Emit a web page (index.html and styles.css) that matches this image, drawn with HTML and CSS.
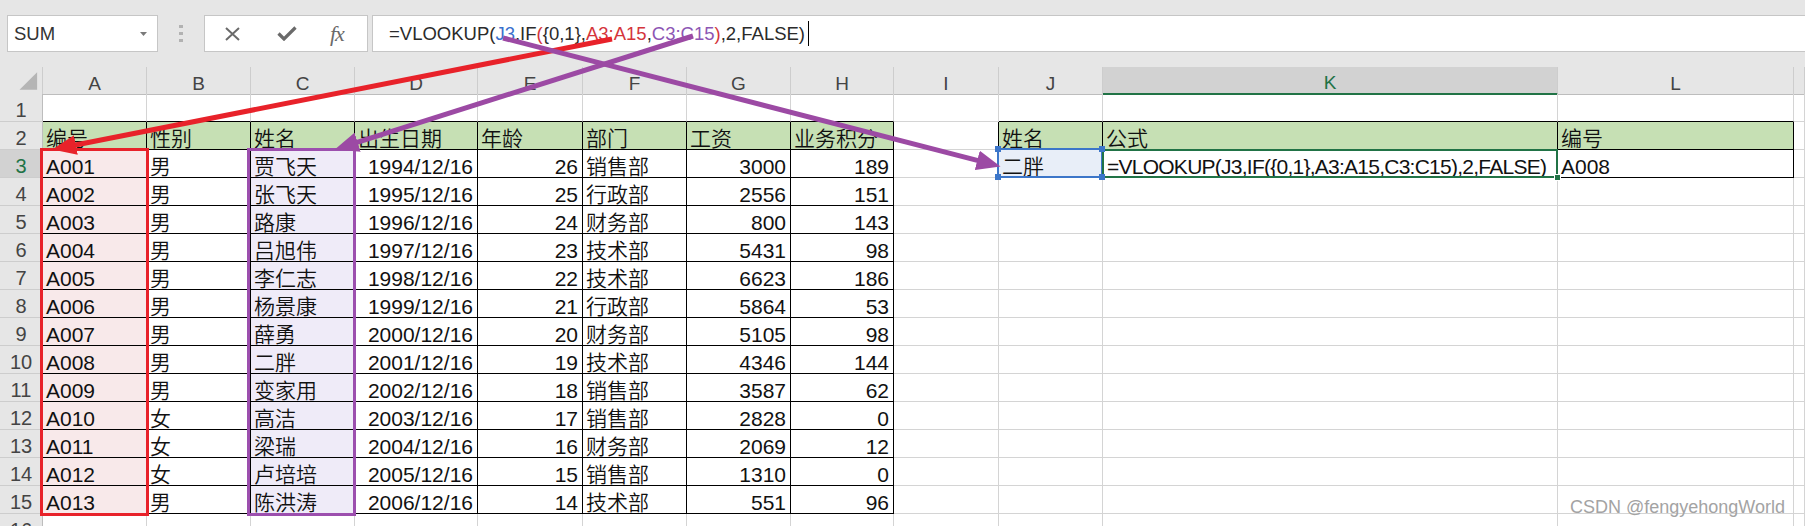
FILE: index.html
```html
<!DOCTYPE html>
<html lang="zh">
<head>
<meta charset="utf-8">
<title>VLOOKUP IF 反向查找</title>
<link rel="stylesheet" href="styles.css">
</head>
<body>
<div class="app">
  <div class="fbar">
    <div class="namebox"><span>SUM</span><svg class="dd" width="7" height="4" viewBox="0 0 7 4"><path d="M0 0H7L3.5 4z" fill="#7a7a7a"/></svg></div>
    <div class="grip"><i></i><i></i><i></i></div>
    <div class="btns">
      <svg class="ix" width="17" height="14" viewBox="0 0 17 14"><path d="M2 1L15 13M15 1L2 13" stroke="#6a6a6a" stroke-width="2" fill="none"/></svg>
      <svg class="ic" width="20" height="15" viewBox="0 0 20 15"><path d="M1.5 7.5L7 13L18.5 1.5" stroke="#6a6a6a" stroke-width="3.2" fill="none"/></svg>
      <span class="fx">fx</span>
    </div>
    <div class="formula"><span>=VLOOKUP(</span><span class="fb">J3</span><span>,IF</span><span class="fr">(</span><span>{0,1},</span><span class="fr">A3:A15</span><span>,</span><span class="fp">C3:C15</span><span class="fr">)</span><span>,2,FALSE)</span><span class="caret"></span></div>
  </div>

  <div class="sheet">
    <div class="row hrow">
      <div class="ch corner"><svg width="43" height="27" viewBox="0 0 43 27"><path d="M20 23H38V5z" fill="#b5b5b5"/></svg></div>
      <div class="ch">A</div><div class="ch">B</div><div class="ch">C</div><div class="ch">D</div><div class="ch">E</div><div class="ch">F</div><div class="ch">G</div><div class="ch">H</div><div class="ch">I</div><div class="ch">J</div><div class="ch sel">K</div><div class="ch">L</div><div class="ch"></div>
    </div>
    <div class="row">
      <div class="rh">1</div>
      <div class="c bb"></div><div class="c bb"></div><div class="c bb"></div><div class="c bb"></div><div class="c bb"></div><div class="c bb"></div><div class="c bb"></div><div class="c bb"></div><div class="c"></div><div class="c bb"></div><div class="c bb"></div><div class="c bb"></div><div class="c"></div>
    </div>
    <div class="row">
      <div class="rh">2</div>
      <div class="c t g">编号</div><div class="c t g">性别</div><div class="c t g">姓名</div><div class="c t g">出生日期</div><div class="c t g">年龄</div><div class="c t g">部门</div><div class="c t g">工资</div><div class="c t g">业务积分</div><div class="c br"></div><div class="c t g">姓名</div><div class="c t g">公式</div><div class="c t g">编号</div><div class="c"></div>
    </div>
    <div class="row">
      <div class="rh rsel">3</div>
      <div class="c t pk">A001</div><div class="c t">男</div><div class="c t lv">贾飞天</div><div class="c t n">1994/12/16</div><div class="c t n">26</div><div class="c t">销售部</div><div class="c t n">3000</div><div class="c t n">189</div><div class="c br"></div>
      <div class="c t ref">二胖<i class="h tl"></i><i class="h tr"></i><i class="h bl"></i><i class="h brh"></i></div>
      <div class="c t act">=VLOOKUP(J3,IF({0,1},A3:A15,C3:C15),2,FALSE)<i class="gh"></i></div>
      <div class="c t">A008</div><div class="c"></div>
    </div>
    <div class="row">
      <div class="rh">4</div>
      <div class="c t pk">A002</div><div class="c t">男</div><div class="c t lv">张飞天</div><div class="c t n">1995/12/16</div><div class="c t n">25</div><div class="c t">行政部</div><div class="c t n">2556</div><div class="c t n">151</div><div class="c"></div><div class="c"></div><div class="c"></div><div class="c"></div><div class="c"></div>
    </div>
    <div class="row">
      <div class="rh">5</div>
      <div class="c t pk">A003</div><div class="c t">男</div><div class="c t lv">路康</div><div class="c t n">1996/12/16</div><div class="c t n">24</div><div class="c t">财务部</div><div class="c t n">800</div><div class="c t n">143</div><div class="c"></div><div class="c"></div><div class="c"></div><div class="c"></div><div class="c"></div>
    </div>
    <div class="row">
      <div class="rh">6</div>
      <div class="c t pk">A004</div><div class="c t">男</div><div class="c t lv">吕旭伟</div><div class="c t n">1997/12/16</div><div class="c t n">23</div><div class="c t">技术部</div><div class="c t n">5431</div><div class="c t n">98</div><div class="c"></div><div class="c"></div><div class="c"></div><div class="c"></div><div class="c"></div>
    </div>
    <div class="row">
      <div class="rh">7</div>
      <div class="c t pk">A005</div><div class="c t">男</div><div class="c t lv">李仁志</div><div class="c t n">1998/12/16</div><div class="c t n">22</div><div class="c t">技术部</div><div class="c t n">6623</div><div class="c t n">186</div><div class="c"></div><div class="c"></div><div class="c"></div><div class="c"></div><div class="c"></div>
    </div>
    <div class="row">
      <div class="rh">8</div>
      <div class="c t pk">A006</div><div class="c t">男</div><div class="c t lv">杨景康</div><div class="c t n">1999/12/16</div><div class="c t n">21</div><div class="c t">行政部</div><div class="c t n">5864</div><div class="c t n">53</div><div class="c"></div><div class="c"></div><div class="c"></div><div class="c"></div><div class="c"></div>
    </div>
    <div class="row">
      <div class="rh">9</div>
      <div class="c t pk">A007</div><div class="c t">男</div><div class="c t lv">薛勇</div><div class="c t n">2000/12/16</div><div class="c t n">20</div><div class="c t">财务部</div><div class="c t n">5105</div><div class="c t n">98</div><div class="c"></div><div class="c"></div><div class="c"></div><div class="c"></div><div class="c"></div>
    </div>
    <div class="row">
      <div class="rh">10</div>
      <div class="c t pk">A008</div><div class="c t">男</div><div class="c t lv">二胖</div><div class="c t n">2001/12/16</div><div class="c t n">19</div><div class="c t">技术部</div><div class="c t n">4346</div><div class="c t n">144</div><div class="c"></div><div class="c"></div><div class="c"></div><div class="c"></div><div class="c"></div>
    </div>
    <div class="row">
      <div class="rh">11</div>
      <div class="c t pk">A009</div><div class="c t">男</div><div class="c t lv">变家用</div><div class="c t n">2002/12/16</div><div class="c t n">18</div><div class="c t">销售部</div><div class="c t n">3587</div><div class="c t n">62</div><div class="c"></div><div class="c"></div><div class="c"></div><div class="c"></div><div class="c"></div>
    </div>
    <div class="row">
      <div class="rh">12</div>
      <div class="c t pk">A010</div><div class="c t">女</div><div class="c t lv">高洁</div><div class="c t n">2003/12/16</div><div class="c t n">17</div><div class="c t">销售部</div><div class="c t n">2828</div><div class="c t n">0</div><div class="c"></div><div class="c"></div><div class="c"></div><div class="c"></div><div class="c"></div>
    </div>
    <div class="row">
      <div class="rh">13</div>
      <div class="c t pk">A011</div><div class="c t">女</div><div class="c t lv">梁瑞</div><div class="c t n">2004/12/16</div><div class="c t n">16</div><div class="c t">财务部</div><div class="c t n">2069</div><div class="c t n">12</div><div class="c"></div><div class="c"></div><div class="c"></div><div class="c"></div><div class="c"></div>
    </div>
    <div class="row">
      <div class="rh">14</div>
      <div class="c t pk">A012</div><div class="c t">女</div><div class="c t lv">卢培培</div><div class="c t n">2005/12/16</div><div class="c t n">15</div><div class="c t">销售部</div><div class="c t n">1310</div><div class="c t n">0</div><div class="c"></div><div class="c"></div><div class="c"></div><div class="c"></div><div class="c"></div>
    </div>
    <div class="row">
      <div class="rh">15</div>
      <div class="c t pk">A013</div><div class="c t">男</div><div class="c t lv">陈洪涛</div><div class="c t n">2006/12/16</div><div class="c t n">14</div><div class="c t">技术部</div><div class="c t n">551</div><div class="c t n">96</div><div class="c"></div><div class="c"></div><div class="c"></div><div class="c"></div><div class="c"></div>
    </div>
    <div class="row">
      <div class="rh">16</div>
      <div class="c"></div><div class="c"></div><div class="c"></div><div class="c"></div><div class="c"></div><div class="c"></div><div class="c"></div><div class="c"></div><div class="c"></div><div class="c"></div><div class="c"></div><div class="c"></div><div class="c"></div>
    </div>
  </div>

  <div class="hl hl-red"></div>
  <div class="hl hl-purple"></div>

  <svg class="arrows" width="1805" height="526" viewBox="0 0 1805 526">
    <defs>
      <marker id="mr" markerUnits="userSpaceOnUse" markerWidth="26" markerHeight="20" refX="8" refY="10" orient="auto"><path d="M0 0L24 10L0 20z" fill="#e8222a"/></marker>
      <marker id="mp" markerUnits="userSpaceOnUse" markerWidth="26" markerHeight="20" refX="8" refY="10" orient="auto"><path d="M0 0L24 10L0 20z" fill="#9c4aa4"/></marker>
    </defs>
    <line x1="612" y1="39" x2="68" y2="146.5" stroke="#e8222a" stroke-width="5" marker-end="url(#mr)"/>
    <line x1="693" y1="36" x2="350" y2="144.6" stroke="#9c4aa4" stroke-width="5" marker-end="url(#mp)"/>
    <line x1="503" y1="38" x2="985" y2="162.4" stroke="#9c4aa4" stroke-width="5" marker-end="url(#mp)"/>
  </svg>

  <div class="wm">CSDN @fengyehongWorld</div>
</div>
</body>
</html>
```

FILE: styles.css
```css
html, body {
  margin: 0;
  padding: 0;
  background: #ffffff;
}

.app {
  position: relative;
  width: 1805px;
  height: 526px;
  overflow: hidden;
  font-family: "Liberation Sans", "Noto Sans CJK SC", sans-serif;
  color: #000;
}

/* ---------- formula bar ---------- */
.fbar {
  box-sizing: border-box;
  height: 67px;
  background: #e6e6e6;
  display: flex;
  align-items: flex-start;
  padding: 15px 0 0 7px;
}

.namebox {
  box-sizing: border-box;
  width: 151px;
  height: 37px;
  background: #fff;
  border: 1px solid #c6c6c6;
  display: flex;
  align-items: center;
  padding-left: 6px;
  font-size: 18.5px;
  color: #333;
}

.namebox .dd {
  margin-left: auto;
  margin-right: 10px;
}

.grip {
  width: 4px;
  margin: 10px 21px 0;
  display: flex;
  flex-direction: column;
  gap: 4px;
}

.grip i {
  display: block;
  width: 4px;
  height: 3px;
  background: #b2b2b2;
}

.btns {
  box-sizing: border-box;
  width: 164px;
  height: 37px;
  background: #fff;
  border: 1px solid #c6c6c6;
  display: flex;
  align-items: center;
}

.btns .ix { margin-left: 19px; }
.btns .ic { margin-left: 36px; }

.fx {
  margin-left: 33px;
  font-family: "Liberation Serif", serif;
  font-style: italic;
  font-size: 22px;
  color: #6a6a6a;
  letter-spacing: -1px;
}

.formula {
  box-sizing: border-box;
  flex: 1;
  height: 37px;
  margin: 0 -2px 0 4px;
  background: #fff;
  border: 1px solid #c6c6c6;
  display: flex;
  align-items: center;
  padding-left: 16px;
  font-size: 18.5px;
  color: #2b2b2b;
  white-space: pre;
}

.fb { color: #3a6fcd; }
.fr { color: #d4353b; }
.fp { color: #8d56b4; }

.caret {
  display: inline-block;
  width: 1px;
  height: 25px;
  margin-left: 3px;
  background: #000;
}

/* ---------- sheet ---------- */
.sheet {
  display: flex;
  flex-direction: column;
}

.row {
  display: grid;
  grid-template-columns: 43px 104px 104px 104px 123px 105px 104px 104px 103px 105px 104px 455px 236px 11px;
  height: 28px;
}

.row.hrow {
  height: 27px;
}

.ch {
  box-sizing: border-box;
  background: #e6e6e6;
  border-right: 1px solid #cdcdcd;
  border-bottom: 1px solid #bdbdbd;
  display: flex;
  align-items: flex-end;
  justify-content: center;
  padding-bottom: 1px;
  font-size: 19px;
  line-height: 19px;
  color: #444;
}

.ch.corner {
  padding: 0;
  align-items: stretch;
  justify-content: stretch;
}

.ch.sel {
  background: #d2d2d2;
  color: #217346;
  border-bottom: 2px solid #217346;
}

.rh {
  box-sizing: border-box;
  background: #e6e6e6;
  border-right: 1px solid #bdbdbd;
  border-bottom: 1px solid #cdcdcd;
  display: flex;
  align-items: flex-end;
  justify-content: center;
  font-size: 20px;
  line-height: 20px;
  color: #444;
  padding-bottom: 1px;
}

.rh.rsel {
  background: #d2d2d2;
  color: #217346;
}

.c {
  box-sizing: border-box;
  position: relative;
  border-right: 1px solid #d4d4d4;
  border-bottom: 1px solid #d4d4d4;
  display: flex;
  align-items: flex-end;
  padding: 0 3px;
  font-size: 21px;
  font-weight: 350;
  line-height: 21px;
  white-space: nowrap;
  color: #111;
}

.c.n {
  justify-content: flex-end;
  padding-right: 4px;
}

.c.t {
  border-right-color: #000;
  border-bottom-color: #000;
}

.c.bb {
  border-bottom-color: #000;
}

.c.br {
  border-right-color: #000;
}

.c.g { background: #c6e0b4; }
.c.pk { background: #f8e9ea; }
.c.lv { background: #efebf8; }

/* reference cell J3 (blue) */
.c.ref {
  background: #e8eef8;
}

.c.ref::after {
  content: "";
  position: absolute;
  left: -2px;
  top: -2px;
  right: -1px;
  bottom: -1px;
  border: 2px solid #3c76c9;
  pointer-events: none;
}

.h {
  position: absolute;
  width: 6px;
  height: 6px;
  background: #3c76c9;
  z-index: 2;
}
.h.tl { left: -4px; top: -4px; }
.h.tr { right: -3px; top: -4px; }
.h.bl { left: -4px; bottom: -3px; }
.h.brh { right: -3px; bottom: -3px; }

/* active cell K3 (green) */
.c.act {
  letter-spacing: -0.75px;
  padding-left: 4px;
}

.c.act::after {
  content: "";
  position: absolute;
  left: -1px;
  top: -1px;
  right: -1px;
  bottom: -1px;
  border: 2px solid #217346;
  pointer-events: none;
}

.gh {
  position: absolute;
  right: -4px;
  bottom: -4px;
  width: 5px;
  height: 5px;
  background: #217346;
  border: 1px solid #fff;
  z-index: 2;
}

/* ---------- overlays ---------- */
.hl {
  position: absolute;
  box-sizing: border-box;
  top: 148px;
  height: 368px;
  width: 109px;
  border: 3px solid;
  z-index: 3;
}

.hl-red {
  left: 40px;
  border-color: #e8222a;
}

.hl-purple {
  left: 247px;
  border-color: #9c4fae;
}

.arrows {
  position: absolute;
  left: 0;
  top: 0;
  z-index: 5;
  pointer-events: none;
}

.wm {
  position: absolute;
  left: 1570px;
  top: 498px;
  font-size: 18px;
  line-height: 18px;
  color: #a3a3a3;
  z-index: 6;
  white-space: nowrap;
}
```
